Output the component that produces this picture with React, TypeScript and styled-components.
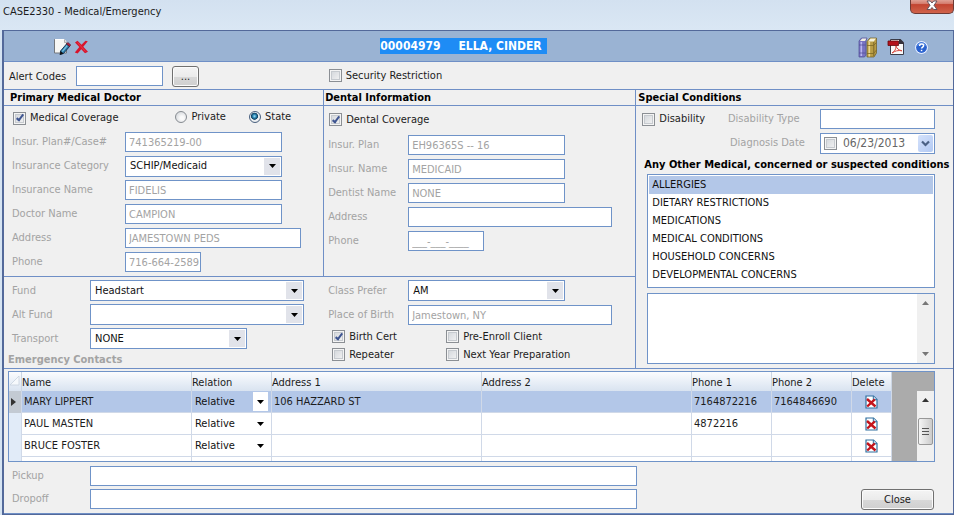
import React from 'react';
import styled, { createGlobalStyle, css } from 'styled-components';

const LINE = '#6f8fc6';
const BORDER = '#6f93c8';
const MUTED = '#a3a3a3';
const SELECTED = '#b3c7e8';

const GlobalStyle = createGlobalStyle`
  *, *::before, *::after { box-sizing: border-box; }
  body {
    margin: 0;
    background: #d6e4f2;
    color: #1c1c1c;
    font: 11px/16px 'DejaVu Sans Condensed', 'Noto Sans', sans-serif;
  }
  button, input, select, textarea { font: inherit; color: inherit; margin: 0; }
  h1, h2, p { margin: 0; font-size: 11px; }
`;

const Window = styled.div`
  min-height: 100vh;
  display: flex;
  flex-direction: column;
  background: #d6e4f2;
`;

const TitleBar = styled.header`
  height: 30px;
  display: flex;
  justify-content: space-between;
  align-items: flex-start;
  padding-left: 3px;
  background: linear-gradient(#d3e1f0, #dae7f4);
`;

const Title = styled.h1`
  padding-top: 4px;
  font-weight: normal;
`;

const WindowClose = styled.button`
  width: 44px;
  height: 14px;
  margin-right: 0;
  padding: 0;
  display: flex;
  justify-content: center;
  border: 1px solid #6d3a35;
  border-top: 0;
  border-radius: 0 0 5px 5px;
  background: linear-gradient(#e0a195, #d4796a 30%, #c24431 35%, #d0634b);
`;

const Body = styled.main`
  flex: 1;
  display: flex;
  flex-direction: column;
  margin: 0 0 1px 2px;
  border: solid #53699a;
  border-width: 1px 1px 1px 2px;
  background: #f0f0f0;
`;

const Toolbar = styled.div`
  height: 31px;
  display: grid;
  grid-template-columns: 1fr auto 1fr;
  align-items: center;
  padding-right: 24px;
  background: #9ab3d3;
  border-bottom: 1px solid ${LINE};
`;

const ToolGroup = styled.div<{ $end?: boolean }>`
  display: flex;
  align-items: center;
  gap: ${(p) => (p.$end ? 9 : 3)}px;
  padding: 2px 0 0 ${(p) => (p.$end ? 0 : 49)}px;
  justify-content: ${(p) => (p.$end ? 'flex-end' : 'flex-start')};
`;

const ToolButton = styled.button`
  display: flex;
  padding: 0;
  border: 0;
  background: none;
`;

const CaseName = styled.h2`
  display: flex;
  gap: 18px;
  margin-right: 6px;
  padding-right: 5px;
  background: #1e8cf5;
  color: #fff;
  font-size: 12px;
  font-weight: bold;
`;

const AlertRow = styled.div`
  height: 28px;
  display: grid;
  grid-template-columns: minmax(0, 320fr) minmax(0, 630fr);
  align-items: center;
  border-bottom: 1px solid ${LINE};
`;

const AlertCodes = styled.div`
  display: flex;
  align-items: center;
  padding: 2px 0 0 5px;
`;

const AlertLabel = styled.label`
  width: 67px;
`;

const RaisedButton = styled.button<{ $width: number }>`
  width: ${(p) => p.$width}px;
  height: 21px;
  padding: 0;
  border: 1px solid #707070;
  border-radius: 3px;
  background: linear-gradient(#f4f4f4, #ebebeb 50%, #d8d8d8 52%, #cfcfcf);
  box-shadow: inset 0 0 0 1px #fbfbfb;
`;

const AlertInputGroup = styled.div`
  display: flex;
  gap: 9px;
`;

const Sections = styled.div`
  display: grid;
  grid-template-columns: minmax(0, 633fr) minmax(0, 317fr);
  border-bottom: 1px solid ${LINE};
`;

const LeftSections = styled.div`
  display: grid;
  grid-template-columns: minmax(0, 321fr) minmax(0, 312fr);
  border-right: 1px solid ${LINE};
`;

const Panel = styled.section<{ $divided?: boolean; $top?: boolean }>`
  border-right: ${(p) => (p.$divided ? `1px solid ${LINE}` : '0')};
  border-bottom: ${(p) => (p.$top ? `1px solid ${LINE}` : '0')};
`;

const PanelHeading = styled.h2<{ $indent: number }>`
  height: 16px;
  padding-left: ${(p) => p.$indent}px;
  line-height: 16px;
  border-bottom: 1px solid ${LINE};
  color: #000;
`;

const Rows = styled.div<{ $indent: number; $top?: number }>`
  display: flex;
  flex-direction: column;
  padding: ${(p) => p.$top ?? 0}px 0 0 ${(p) => p.$indent}px;
`;

const Row = styled.div<{ $height?: number; $label?: number }>`
  height: ${(p) => p.$height ?? 24}px;
  display: grid;
  grid-template-columns: ${(p) => p.$label ?? 113}px minmax(0, 1fr);
  align-items: center;
`;

const Muted = styled.label`
  color: ${MUTED};
`;

const Field = styled.input<{ $width?: number; $live?: boolean }>`
  width: ${(p) => (p.$width ? `${p.$width}px` : '100%')};
  max-width: 100%;
  height: 20px;
  padding: 1px 0 0 3px;
  border: 1px solid ${BORDER};
  background: #fff;
  color: ${(p) => (p.$live ? '#1c1c1c' : MUTED)};
  outline: 0;
`;

const SelectShell = styled.span<{ $width: number }>`
  width: ${(p) => p.$width}px;
  max-width: 100%;
  height: 21px;
  display: grid;
  grid-template-columns: minmax(0, 1fr) 16px;
  border: 1px solid ${BORDER};
  background: #fff;
  padding: 1px;
`;

const NativeSelect = styled.select`
  grid-row: 1;
  grid-column: 1 / 3;
  padding: 0 3px;
  border: 0;
  appearance: none;
  background: none;
  outline: 0;
  color: #111;
`;

const ArrowPad = styled.span`
  grid-row: 1;
  grid-column: 2;
  display: flex;
  align-items: center;
  justify-content: center;
  background: #e1e3ea;
  pointer-events: none;
`;

const CheckInput = styled.input`
  appearance: none;
  flex: none;
  display: grid;
  place-items: center;
  width: 13px;
  height: 13px;
  border: 1px solid #8b8f94;
  background: linear-gradient(135deg, #cfd3d8, #f6f6f6);
  box-shadow: inset 0 0 0 1px #f4f4f4, inset 0 0 0 2px #c6cacf;

  &:checked::after {
    content: '';
    width: 4px;
    height: 8px;
    margin-bottom: 2px;
    border: solid #3f5591;
    border-width: 0 2px 2px 0;
    transform: rotate(38deg);
  }
`;

const RadioInput = styled.input`
  appearance: none;
  flex: none;
  width: 12px;
  height: 12px;
  border: 1px solid #868b91;
  border-radius: 50%;
  background: radial-gradient(circle at 60% 60%, #fafafa 20%, #c9cdd2);

  &:checked {
    border-color: #4a6180;
    background: radial-gradient(circle at 45% 42%, #9fe2f8 0, #2a86b4 22%, #12405f 40%, #dfe8ee 48%, #f4f4f4 60%, #b9c4cf);
  }
`;

const Choice = styled.label`
  display: inline-flex;
  align-items: center;
  gap: 4px;
  white-space: nowrap;
`;

const CoverageRow = styled.div<{ $height: number }>`
  height: ${(p) => p.$height}px;
  display: flex;
  align-items: center;
  padding-left: 1px;
`;

const Radios = styled.div`
  display: flex;
  gap: 23px;
  margin: 0 0 2px 57px;
`;

const SectionFooter = styled.h2`
  height: 16px;
  padding-left: 4px;
  line-height: 18px;
  color: ${MUTED};
`;

const CheckGrid = styled.div`
  display: grid;
  grid-template-columns: 114px 1fr;
  grid-auto-rows: 18px;
  align-items: center;
  padding: 1px 0 0 8px;
`;

const Conditions = styled.div`
  display: flex;
  flex-direction: column;
  padding: 1px 18px 0 11px;
`;

const DisabilityRow = styled.div`
  height: 24px;
  display: grid;
  grid-template-columns: minmax(0, 1fr) 92px 115px;
  align-items: center;
  margin-left: -5px;
`;

const DateLabel = styled(Muted)`
  padding-left: 2px;
`;

const DateBox = styled.div`
  height: 21px;
  display: grid;
  grid-template-columns: 13px minmax(0, 1fr) 15px;
  gap: 6px;
  align-items: center;
  padding: 0 1px 0 3px;
  border: 1px solid ${BORDER};
  background: #fff;
`;

const DateInput = styled.input`
  width: 100%;
  padding: 0;
  border: 0;
  outline: 0;
  background: none;
  color: #666;
  font-size: 12px;
`;

const DateButton = styled.button`
  height: 17px;
  padding: 0;
  display: grid;
  place-items: center;
  border: 0;
  border-radius: 2px;
  background: linear-gradient(135deg, #d5e2fb, #b2c9f3);
`;

const ConditionsTitle = styled.h2`
  height: 19px;
  margin: 0 -18px 0 -3px;
  line-height: 20px;
  color: #000;
  white-space: nowrap;
`;

const ConditionList = styled.select`
  height: 114px;
  margin: 0;
  padding: 1px;
  border: 1px solid ${BORDER};
  background: #fff;
  outline: 0;
  overflow: hidden;
  border-radius: 0;

  option {
    height: 18px;
    min-height: 18px;
    padding: 2px 3px 0;
    line-height: 16px;
    color: #111;
  }
  option:checked {
    background: ${SELECTED} linear-gradient(${SELECTED}, ${SELECTED});
  }
`;

const NotesShell = styled.div`
  height: 71px;
  margin: 5px 0 4px;
  display: grid;
  grid-template-columns: minmax(0, 1fr) 17px;
  border: 1px solid ${BORDER};
  background: #fff;
`;

const Notes = styled.textarea`
  border: 0;
  outline: 0;
  resize: none;
  overflow: hidden;
  background: none;
`;

const ScrollTrack = styled.div`
  display: flex;
  flex-direction: column;
  justify-content: space-between;
  align-items: center;
  padding: 7px 0;
  background: #f0f0f0;
`;

const ScrollThumb = styled.div`
  width: 15px;
  height: 27px;
  margin-bottom: 7px;
  display: grid;
  place-items: center;
  border: 1px solid #979797;
  border-radius: 2px;
  background: linear-gradient(90deg, #f5f5f5, #dcdcdc 60%, #cbcbcb);
`;

const GridShell = styled.div`
  height: 91px;
  margin: 2px 18px 0 4px;
  display: grid;
  grid-template-columns: minmax(0, 1fr) 25px 17px;
  border: 1px solid ${BORDER};
  background: #ababab;
  overflow: hidden;
`;

const GridScroll = styled.div`
  grid-column: 3;
  margin-top: 19px;
  display: grid;
`;

const ContactTable = styled.table`
  width: 100%;
  table-layout: fixed;
  border-collapse: separate;
  border-spacing: 0;
  background: #fff;
`;

const HeadCell = styled.th`
  height: 19px;
  padding: 2px 0 0;
  border-right: 1px solid #ccd6e4;
  background: linear-gradient(#fbfcfe, #e6edf6 60%, #d9e3f0);
  font-weight: normal;
  line-height: 16px;
  text-align: left;
`;

const Cell = styled.td<{ $tight?: boolean }>`
  height: 22px;
  padding: ${(p) => (p.$tight ? '0' : '0 3px 0 2px')};
  border: solid #d0d9e8;
  border-width: 0 1px 1px 0;
  line-height: 16px;
`;

const ContactRow = styled.tr<{ $active?: boolean }>`
  ${(p) =>
    p.$active &&
    css`
      background: ${SELECTED};
    `}
`;

const Marker = styled.td<{ $active?: boolean }>`
  padding: 0 0 0 2px;
  border-right: 1px solid #d0d9e8;
  background: ${(p) => (p.$active ? '#c3cad3' : '#e1ebf8')};
  line-height: 0;
`;

const RelationShell = styled.span`
  height: 21px;
  display: grid;
  grid-template-columns: minmax(0, 1fr) 15px;
  align-items: center;
  padding: 1px 3px 1px 0;
`;

const RelationArrow = styled.span`
  grid-row: 1;
  grid-column: 2;
  height: 19px;
  display: grid;
  place-items: center;
  background: #fff;
  pointer-events: none;
`;

const DeleteButton = styled.button`
  width: 100%;
  padding: 0;
  display: flex;
  justify-content: center;
  border: 0;
  background: none;
`;

const Footer = styled.div`
  flex: 1;
  display: grid;
  grid-template-columns: minmax(0, 628fr) minmax(0, 298fr);
  align-items: end;
  justify-items: end;
  padding: 2px 19px 3px 8px;
  border-bottom: 1px solid ${LINE};
`;

const Routes = styled.div`
  width: 100%;
`;

const Down = ({ fill = '#000' }: { fill?: string }) => (
  <svg width="7" height="4" viewBox="0 0 7 4"><path d="M0 0h7L3.5 4z" fill={fill} /></svg>
);
const Up = ({ fill = '#333' }: { fill?: string }) => (
  <svg width="7" height="4" viewBox="0 0 7 4"><path d="M0 4h7L3.5 0z" fill={fill} /></svg>
);

const EditIcon = () => (
  <svg width="18" height="18" viewBox="0 0 18 18">
    <path d="M1.500 1.500h10l2 3v10.500h-12z" fill="#f7f7f4" stroke="#73777c" />
    <path d="M2 1.500h9.500l2 3" fill="none" stroke="#fff" />
    <path d="M11.500 1.500v3h2.500" fill="#ddd" stroke="#999" strokeWidth=".7" />
    <path d="M7.500 13l6-7 3 2.500-6 7-3.200 1z" fill="#2c79a8" stroke="#15324f" strokeWidth=".9" />
    <path d="M9.300 13.500l5-6" stroke="#79c4e0" strokeWidth="1.200" />
    <path d="M13.500 6l1.300-1.500 3 2.400-1.300 1.600z" fill="#b5203a" stroke="#541020" strokeWidth=".6" />
    <path d="M7.500 13l3 2.500-3.800 1.500z" fill="#111" />
  </svg>
);
const DeleteIcon = () => (
  <svg width="15" height="14" viewBox="0 0 15 14">
    <path d="M1 2.500L3.500.8l4 4L11.500.8l2.300.4-4.500 5.600 4.700 5-3 1.400-3.700-4L3.600 13.500l-2.800-1L5.300 7z" fill="#d8142c" />
    <path d="M3.500 2.500l8 9" stroke="#ef5062" strokeWidth=".6" />
  </svg>
);
const BooksIcon = () => (
  <svg width="20" height="21" viewBox="0 0 20 21">
    <path d="M1 4l2.500-3H9L8 4v14l-1.500 2H1z" fill="#7773c2" stroke="#4d4a94" strokeWidth=".7" />
    <path d="M2 4l2-2.500h4.500L7 4z" fill="#f2f0e2" />
    <path d="M3.300 5v14" stroke="#b9b6f0" strokeWidth="1.600" />
    <path d="M1 8h6.500M1 16h6.500" stroke="#4d4a94" strokeWidth=".7" />
    <path d="M9 4.500L12 1h6.500v15L16 20H9z" fill="#b89c45" stroke="#6f5b1f" strokeWidth=".7" />
    <path d="M10 4.500l2.500-3H18l-2.300 3z" fill="#f6f1d8" />
    <path d="M11.300 5v14.500" stroke="#e8d68f" strokeWidth="1.600" />
    <path d="M15.800 5v14" stroke="#6f5b1f" strokeWidth=".8" />
    <path d="M9 8.500h6.500l3-3M9 16.500h6.500l3-3.500" fill="none" stroke="#7c6726" strokeWidth=".8" />
  </svg>
);
const PdfIcon = () => (
  <svg width="18" height="18" viewBox="0 0 18 18">
    <path d="M3.500 1.500h9l4 3.500v11.500h-13z" fill="#fafafa" stroke="#3c3c48" />
    <path d="M12 1h1.500L17 4.500V6h-5z" fill="#35313c" />
    <path d="M1 3h10.500v4.500H1z" fill="#b5121b" stroke="#66090e" strokeWidth=".8" />
    <path d="M9 8c.3 3-1.500 5.500-4 7 3-2 6-3 10-2.200-3.500-.8-5-2-6-4.800z" fill="none" stroke="#d84a40" strokeWidth="1" />
  </svg>
);
const HelpIcon = () => (
  <svg width="15" height="15" viewBox="0 0 15 15">
    <circle cx="7.500" cy="7.500" r="6.800" fill="#eef5ff" stroke="#7fa0d8" strokeWidth=".6" />
    <circle cx="7.500" cy="7.500" r="5.400" fill="#2a62cf" />
    <path d="M3.500 5.500a4.500 4.500 0 0 1 8 0" fill="none" stroke="#6f9ff0" strokeWidth="1" />
    <path d="M5.600 6c0-2.600 4-2.600 4-.3 0 1.400-2 1.400-2 2.900" fill="none" stroke="#fff" strokeWidth="1.500" />
    <path d="M6.800 9.800h1.500v1.400H6.800z" fill="#fff" />
  </svg>
);
const RowDeleteIcon = () => (
  <svg width="13" height="14" viewBox="0 0 13 14">
    <path d="M1 1h7.500L12 4.500V13H1z" fill="#fff" stroke="#2f6f9f" strokeWidth="1.200" />
    <path d="M8.300 1v3.700H12" fill="#cfe3f2" stroke="#2f6f9f" strokeWidth="1" />
    <path d="M2 4l8.500 7.500M9.800 4.300l-7.600 7.200" stroke="#c4141c" strokeWidth="2.400" />
  </svg>
);
const WindowX = () => (
  <svg width="12" height="11" viewBox="0 0 12 11">
    <path d="M1 1h3.300L6 3 7.700 1H11L8 5.300 11 9.500H7.700L6 7.500l-1.700 2H1l3-4.200z" fill="#fff" stroke="#5a4a55" strokeWidth=".9" />
  </svg>
);

type TextRowProps = { id: string; label: string; value?: string; width: number; labelWidth?: number };
const TextRow = ({ id, label, value = '', width, labelWidth }: TextRowProps) => (
  <Row $label={labelWidth}>
    <Muted htmlFor={id}>{label}</Muted>
    <Field id={id} $width={width} defaultValue={value} />
  </Row>
);

type SelectRowProps = { id: string; label: string; value: string; width: number; labelWidth?: number };
const SelectRow = ({ id, label, value, width, labelWidth }: SelectRowProps) => (
  <Row $label={labelWidth}>
    <Muted htmlFor={id}>{label}</Muted>
    <SelectShell $width={width}>
      <ArrowPad><Down /></ArrowPad>
      <NativeSelect id={id} defaultValue={value}>
        <option>{value}</option>
      </NativeSelect>
    </SelectShell>
  </Row>
);

const Check = ({ label, checked }: { label: string; checked?: boolean }) => (
  <Choice>
    <CheckInput type="checkbox" defaultChecked={checked} />
    {label}
  </Choice>
);

const conditions = [
  'ALLERGIES',
  'DIETARY RESTRICTIONS',
  'MEDICATIONS',
  'MEDICAL CONDITIONS',
  'HOUSEHOLD CONCERNS',
  'DEVELOPMENTAL CONCERNS',
];

const contacts = [
  { name: 'MARY LIPPERT', address: '106 HAZZARD ST', phone1: '7164872216', phone2: '7164846690' },
  { name: 'PAUL MASTEN', address: '', phone1: '4872216', phone2: '' },
  { name: 'BRUCE FOSTER', address: '', phone1: '', phone2: '' },
];

const columns = ['Name', 'Relation', 'Address 1', 'Address 2', 'Phone 1', 'Phone 2', 'Delete'];
const columnWidths = [13, 170, 80, 210, 210, 80, 80, 40];
const columnTotal = columnWidths.reduce((sum, width) => sum + width, 0);

export default function App() {
  return (
    <>
      <GlobalStyle />
      <Window>
        <TitleBar>
          <Title>CASE2330 - Medical/Emergency</Title>
          <WindowClose aria-label="Close window"><WindowX /></WindowClose>
        </TitleBar>
        <Body>
          <Toolbar>
            <ToolGroup>
              <ToolButton aria-label="Edit"><EditIcon /></ToolButton>
              <ToolButton aria-label="Delete"><DeleteIcon /></ToolButton>
            </ToolGroup>
            <CaseName><span>00004979</span><span>ELLA, CINDER</span></CaseName>
            <ToolGroup $end>
              <ToolButton aria-label="Case notes"><BooksIcon /></ToolButton>
              <ToolButton aria-label="Export PDF"><PdfIcon /></ToolButton>
              <ToolButton aria-label="Help"><HelpIcon /></ToolButton>
            </ToolGroup>
          </Toolbar>

          <AlertRow>
            <AlertCodes>
              <AlertLabel htmlFor="alert">Alert Codes</AlertLabel>
              <AlertInputGroup>
                <Field id="alert" $width={87} $live />
                <RaisedButton $width={27} aria-label="Browse alert codes">...</RaisedButton>
              </AlertInputGroup>
            </AlertCodes>
            <Rows $indent={5}><Check label="Security Restriction" /></Rows>
          </AlertRow>

          <Sections>
            <LeftSections>
              <Panel $divided $top>
                <PanelHeading $indent={6}>Primary Medical Doctor</PanelHeading>
                <Rows $indent={8}>
                  <CoverageRow $height={24}>
                    <Check label="Medical Coverage" checked />
                    <Radios>
                      <Choice><RadioInput type="radio" name="plan" />Private</Choice>
                      <Choice><RadioInput type="radio" name="plan" defaultChecked />State</Choice>
                    </Radios>
                  </CoverageRow>
                  <TextRow id="plan" label="Insur. Plan#/Case#" value="741365219-00" width={157} />
                  <SelectRow id="category" label="Insurance Category" value="SCHIP/Medicaid" width={157} />
                  <TextRow id="insurance" label="Insurance Name" value="FIDELIS" width={157} />
                  <TextRow id="doctor" label="Doctor Name" value="CAMPION" width={157} />
                  <TextRow id="doctor-address" label="Address" value="JAMESTOWN PEDS" width={176} />
                  <TextRow id="doctor-phone" label="Phone" value="716-664-2589" width={76} />
                </Rows>
              </Panel>

              <Panel $top>
                <PanelHeading $indent={1}>Dental Information</PanelHeading>
                <Rows $indent={4}>
                  <CoverageRow $height={27}><Check label="Dental Coverage" checked /></CoverageRow>
                  <TextRow id="dental-plan" label="Insur. Plan" value="EH96365S -- 16" width={157} labelWidth={80} />
                  <TextRow id="dental-name" label="Insur. Name" value="MEDICAID" width={157} labelWidth={80} />
                  <TextRow id="dentist" label="Dentist Name" value="NONE" width={157} labelWidth={80} />
                  <TextRow id="dental-address" label="Address" width={204} labelWidth={80} />
                  <TextRow id="dental-phone" label="Phone" value="___-___-____" width={76} labelWidth={80} />
                </Rows>
              </Panel>

              <Panel>
                <Rows $indent={8} $top={2}>
                  <SelectRow id="fund" label="Fund" value="Headstart" width={214} labelWidth={78} />
                  <SelectRow id="alt-fund" label="Alt Fund" value="" width={214} labelWidth={78} />
                  <SelectRow id="transport" label="Transport" value="NONE" width={157} labelWidth={78} />
                </Rows>
                <SectionFooter>Emergency Contacts</SectionFooter>
              </Panel>

              <Panel>
                <Rows $indent={4} $top={2}>
                  <SelectRow id="class" label="Class Prefer" value="AM" width={157} labelWidth={80} />
                  <TextRow id="birthplace" label="Place of Birth" value="Jamestown, NY" width={204} labelWidth={80} />
                </Rows>
                <CheckGrid>
                  <Check label="Birth Cert" checked />
                  <Check label="Pre-Enroll Client" />
                  <Check label="Repeater" />
                  <Check label="Next Year Preparation" />
                </CheckGrid>
              </Panel>
            </LeftSections>

            <Panel>
              <PanelHeading $indent={2}>Special Conditions</PanelHeading>
              <Conditions>
                <DisabilityRow>
                  <Check label="Disability" />
                  <Muted htmlFor="disability-type">Disability Type</Muted>
                  <Field id="disability-type" />
                </DisabilityRow>
                <DisabilityRow>
                  <span />
                  <DateLabel htmlFor="diagnosis-date">Diagnosis Date</DateLabel>
                  <DateBox>
                    <CheckInput type="checkbox" aria-label="Use diagnosis date" />
                    <DateInput id="diagnosis-date" defaultValue="06/23/2013" />
                    <DateButton aria-label="Open calendar">
                      <svg width="9" height="7" viewBox="0 0 9 7">
                        <path d="M1 1.500l3.500 3.500L8 1.500" fill="none" stroke="#4b6185" strokeWidth="2.200" />
                      </svg>
                    </DateButton>
                  </DateBox>
                </DisabilityRow>
                <ConditionsTitle id="conditions-title">
                  Any Other Medical, concerned or suspected conditions
                </ConditionsTitle>
                <ConditionList size={6} defaultValue="ALLERGIES" aria-labelledby="conditions-title">
                  {conditions.map((name) => <option key={name}>{name}</option>)}
                </ConditionList>
                <NotesShell>
                  <Notes aria-label="Condition notes" />
                  <ScrollTrack><Up fill="#777" /><Down fill="#777" /></ScrollTrack>
                </NotesShell>
              </Conditions>
            </Panel>
          </Sections>

          <GridShell>
            <ContactTable>
              <colgroup>
                {columnWidths.map((width, i) => (
                  <col key={i} style={{ width: `${(width / columnTotal) * 100}%` }} />
                ))}
              </colgroup>
              <thead>
                <tr>
                  <HeadCell aria-label="Row marker">
                    <svg width="11" height="11" viewBox="0 0 11 11">
                      <path d="M10 1v9H1z" fill="#f6f9fc" stroke="#c8d2de" strokeWidth=".8" />
                    </svg>
                  </HeadCell>
                  {columns.map((name) => <HeadCell key={name}>{name}</HeadCell>)}
                </tr>
              </thead>
              <tbody>
                {contacts.map((contact, i) => (
                  <ContactRow key={contact.name} $active={i === 0}>
                    <Marker $active={i === 0}>
                      {i === 0 && (
                        <svg width="5" height="8" viewBox="0 0 5 8"><path d="M0 0l5 4-5 4z" fill="#333" /></svg>
                      )}
                    </Marker>
                    <Cell>{contact.name}</Cell>
                    <Cell $tight>
                      <RelationShell>
                        <RelationArrow><Down /></RelationArrow>
                        <NativeSelect aria-label={`Relation of ${contact.name}`}>
                          <option>Relative</option>
                        </NativeSelect>
                      </RelationShell>
                    </Cell>
                    <Cell>{contact.address}</Cell>
                    <Cell />
                    <Cell>{contact.phone1}</Cell>
                    <Cell>{contact.phone2}</Cell>
                    <Cell $tight>
                      <DeleteButton aria-label={`Delete ${contact.name}`}><RowDeleteIcon /></DeleteButton>
                    </Cell>
                  </ContactRow>
                ))}
                <ContactRow>
                  <Marker />
                  {columns.map((name) => <Cell key={name} />)}
                </ContactRow>
              </tbody>
            </ContactTable>
            <GridScroll>
              <ScrollTrack>
                <Up />
                <ScrollThumb>
                  <svg width="7" height="8" viewBox="0 0 7 8">
                    <path d="M0 .5h7M0 3.500h7M0 6.500h7" stroke="#555" />
                  </svg>
                </ScrollThumb>
                <Down fill="#333" />
              </ScrollTrack>
            </GridScroll>
          </GridShell>

          <Footer>
            <Routes>
              <Row $label={78} $height={23}>
                <Muted htmlFor="pickup">Pickup</Muted>
                <Field id="pickup" />
              </Row>
              <Row $label={78} $height={23}>
                <Muted htmlFor="dropoff">Dropoff</Muted>
                <Field id="dropoff" />
              </Row>
            </Routes>
            <RaisedButton $width={73}>Close</RaisedButton>
          </Footer>
        </Body>
      </Window>
    </>
  );
}
